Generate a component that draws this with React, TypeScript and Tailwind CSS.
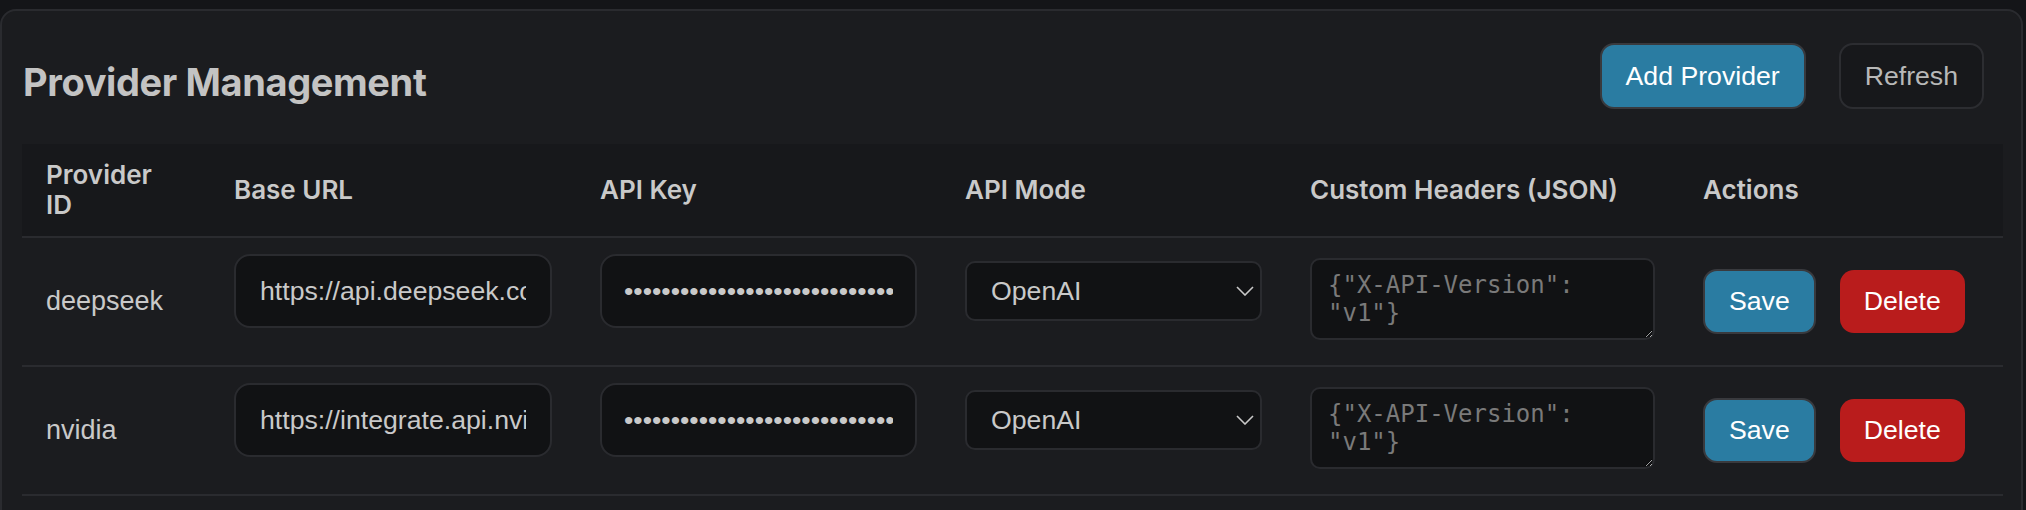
import React from "react";

const COLS = "grid grid-cols-[188px_366px_365px_345px_393px_324px]";
const CELL = "flex items-center px-[24px] pt-[16px] pb-[17px]";

function Chevron() {
  return (
    <svg width="18" height="10" viewBox="0 0 18 10" fill="none" className="pointer-events-none absolute right-[8px] top-1/2 -translate-y-1/2">
      <polyline points="1,1 9,9 17,1" stroke="#c9c9c9" strokeWidth="1.6" fill="none" />
    </svg>
  );
}

function Row({ id, url }: { id: string; url: string }) {
  return (
    <div className={`${COLS} border-b-2 border-[#2a2b2f]`}>
      <div className={`${CELL} text-[27px] text-[#c9c9c9]`}>{id}</div>
      <div className={CELL}>
        <input
          readOnly
          value={url}
          className="mb-[20px] h-[74px] w-full rounded-[16px] border-2 border-[#2a2b2f] bg-[#111214] px-[24px] text-[26.67px] text-[#c9c9c9] outline-none"
        />
      </div>
      <div className={CELL}>
        <input
          readOnly
          type="password"
          value="sk-abcdefghijklmnopqrstuvwxyz0123456789abcdefghij"
          className="mb-[20px] h-[74px] w-full rounded-[16px] border-2 border-[#2a2b2f] bg-[#111214] px-[22px] text-[26.67px] text-[#c9c9c9] outline-none"
        />
      </div>
      <div className={CELL}>
        <div className="relative mb-[20px] w-full">
          <select
            defaultValue="openai"
            className="h-[60px] w-full appearance-none rounded-[10px] border-2 border-[#2a2b2f] bg-[#111214] pl-[24px] pr-[40px] text-[26.67px] text-[#c9c9c9] outline-none"
          >
            <option value="openai">OpenAI</option>
            <option value="anthropic">Anthropic</option>
          </select>
          <Chevron />
        </div>
      </div>
      <div className={CELL}>
        <textarea
          placeholder={'{"X-API-Version": "v1"}'}
          className="mb-[5px] h-[82px] w-full rounded-[10px] border-2 border-[#2a2b2f] bg-[#111214] px-[16px] py-[11px] font-['DejaVu_Sans_Mono',monospace] text-[24px] leading-[28px] text-[#c9c9c9] outline-none placeholder:text-[#7a7a7a]"
        />
      </div>
      <div className={`${CELL} gap-[24px]`}>
        <button className="h-[65px] rounded-[14px] border-2 border-[#393a3e] bg-[#2a7ca2] px-[24px] text-[26.67px] text-white">
          Save
        </button>
        <button className="h-[63px] rounded-[14px] bg-[#b91c1c] px-[24px] text-[26.67px] text-white">
          Delete
        </button>
      </div>
    </div>
  );
}

export default function App() {
  const th = "flex items-center px-[24px] py-[16px] font-['Inter',sans-serif] text-[26px] font-semibold leading-[30px] text-[#c9c9c9]";
  return (
    <div className="h-[510px] w-[2026px] overflow-hidden bg-[#141518] pt-[9px] font-['Liberation_Sans',Arial,sans-serif]">
      <div className="mr-[3px] min-h-[560px] rounded-[16px] border-2 border-[#2a2b2f] bg-[#1b1c1f] pl-[20px] pr-[18px] pt-[32px]">
        <div className="mb-[35px] mr-[19px] flex items-start justify-between">
          <h1 className="ml-[1px] mt-[16px] font-['Inter',sans-serif] text-[38px] font-bold leading-[46px] tracking-[-0.01em] text-[#c3c3c3]">
            Provider Management
          </h1>
          <div className="flex items-center gap-[33px]">
            <button className="h-[66px] rounded-[14px] border-2 border-[#393a3e] bg-[#2a7ca2] px-[24px] text-[26.67px] text-white">
              Add Provider
            </button>
            <button className="h-[66px] rounded-[14px] border-2 border-[#2c2d31] bg-[#17181b] px-[24px] text-[26.67px] text-[#b8b8b8]">
              Refresh
            </button>
          </div>
        </div>
        <div className="w-[1981px]">
          <div className={`${COLS} border-b-2 border-[#2a2b2f] bg-[#17181b]`}>
            <div className={th}>
              <span className="w-[120px]">Provider ID</span>
            </div>
            <div className={th}>Base URL</div>
            <div className={th}>API Key</div>
            <div className={th}>API Mode</div>
            <div className={th}>Custom Headers (JSON)</div>
            <div className={th}>Actions</div>
          </div>
          <Row id="deepseek" url="https://api.deepseek.com/v1" />
          <Row id="nvidia" url="https://integrate.api.nvidia.com/v1" />
        </div>
      </div>
    </div>
  );
}
